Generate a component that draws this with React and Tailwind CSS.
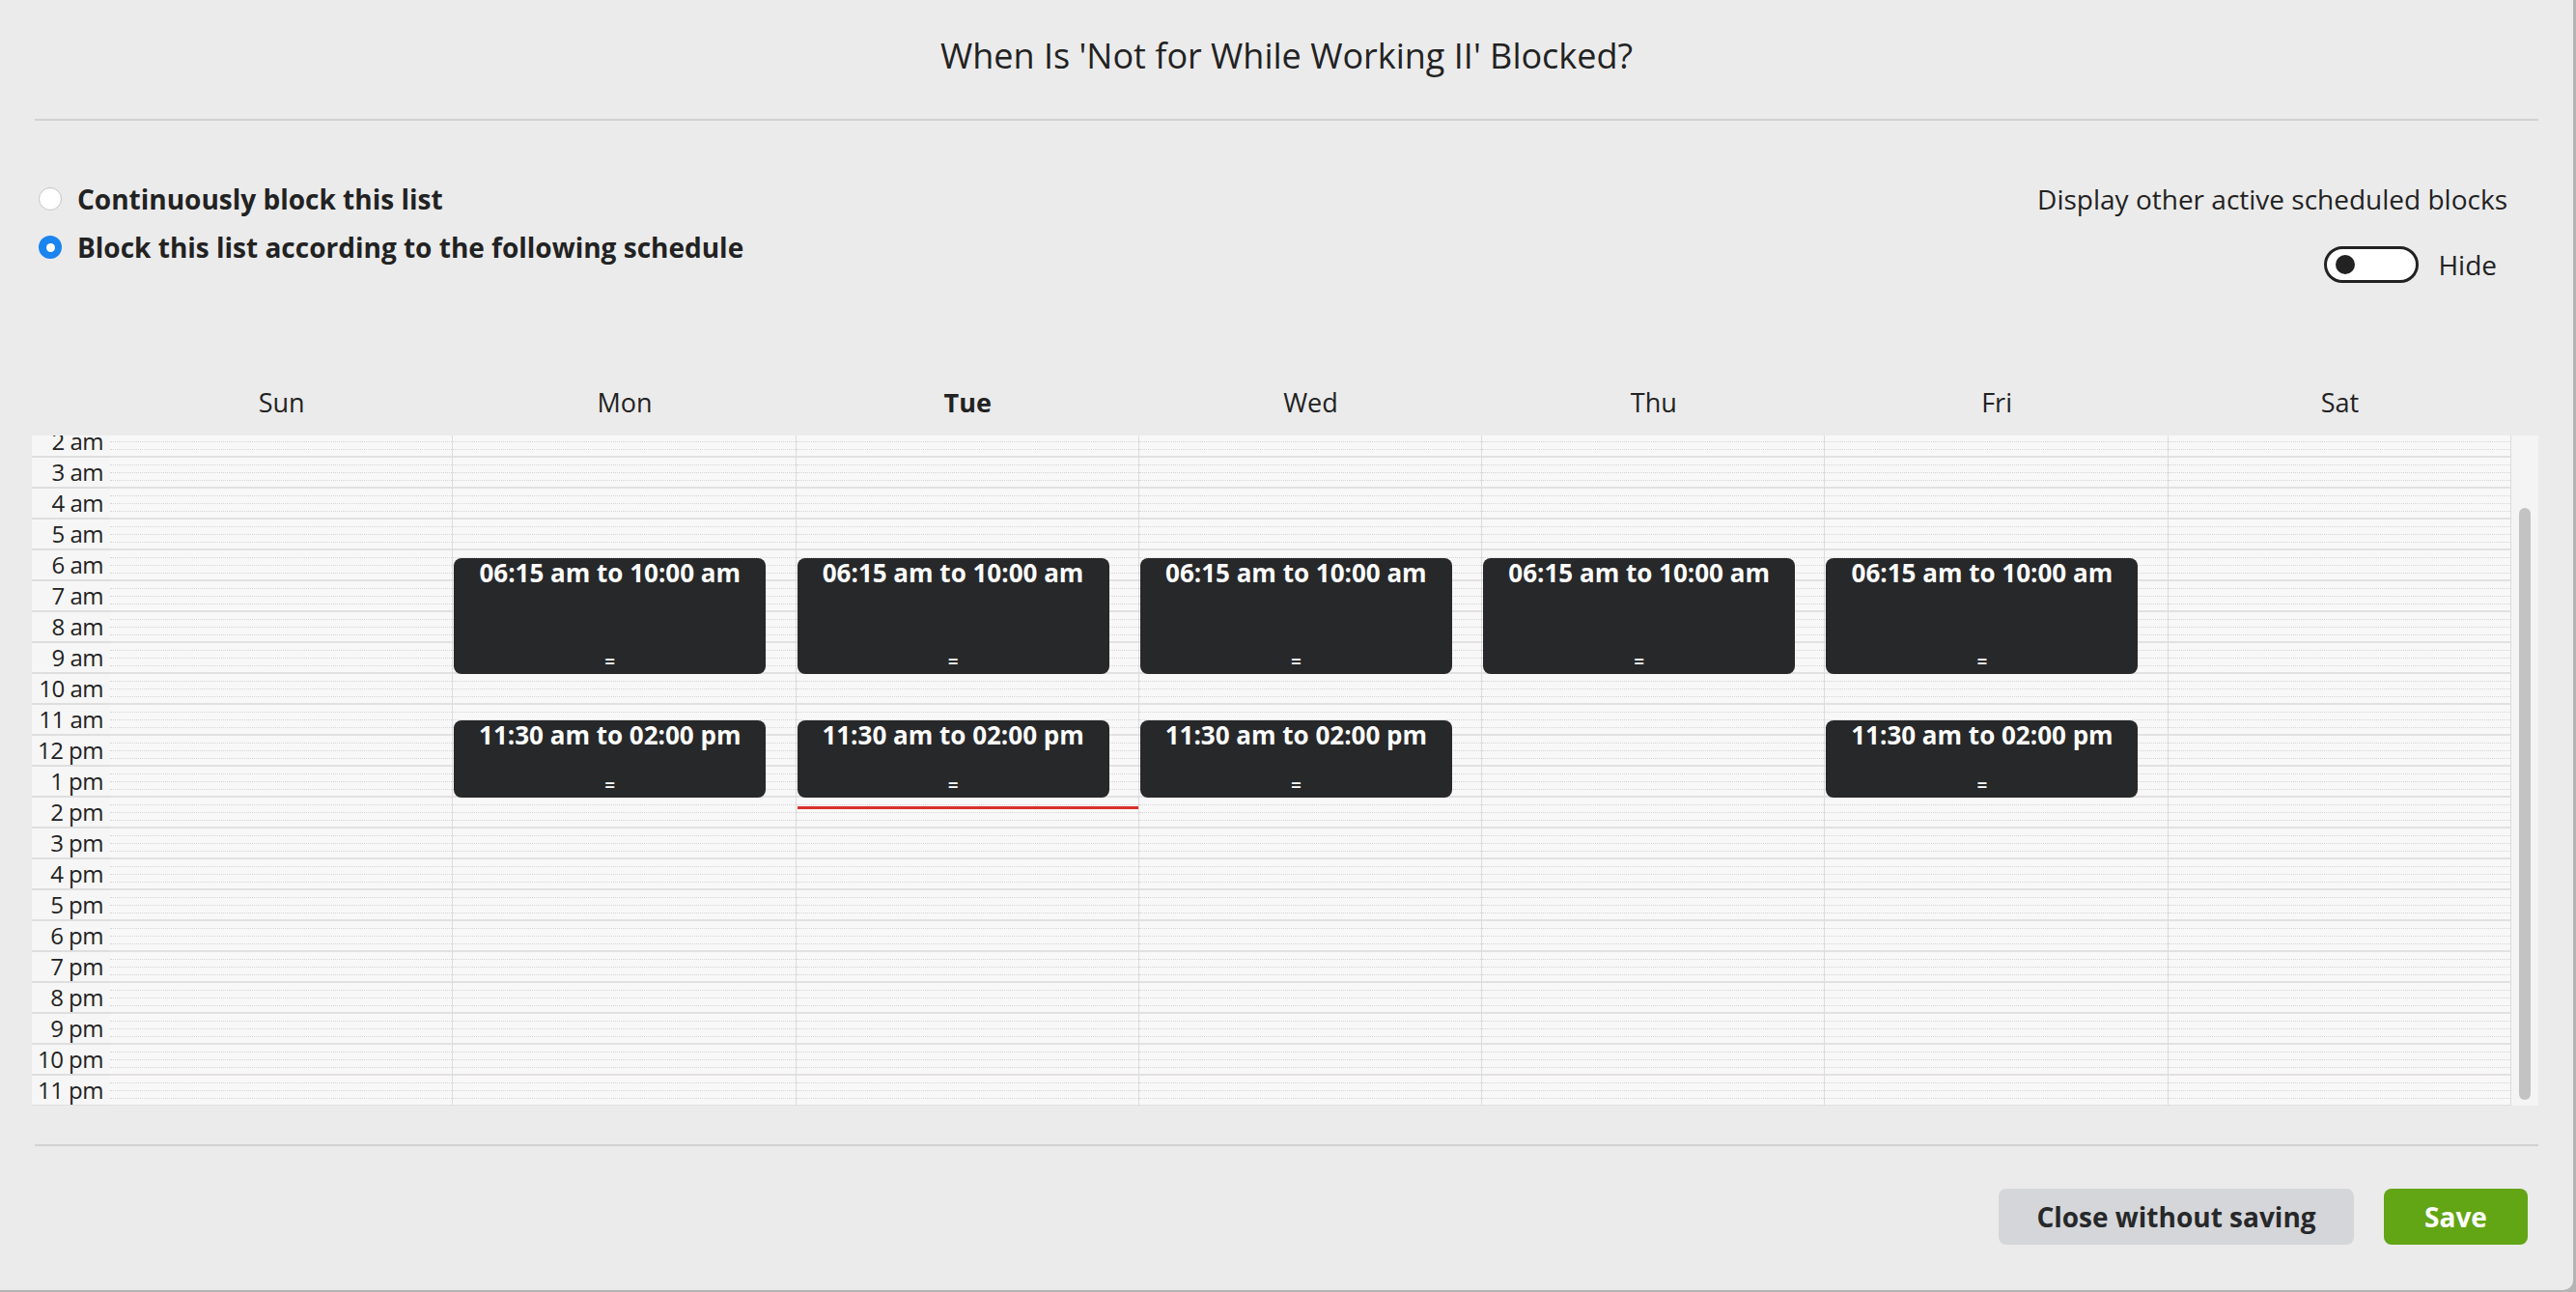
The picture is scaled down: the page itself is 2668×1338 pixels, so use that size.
import React from "react";

const DAYS = ["Sun", "Mon", "Tue", "Wed", "Thu", "Fri", "Sat"];
const HOUR = 32;

const hourLabel = (h) => {
  const n = h % 12 === 0 ? 12 : h % 12;
  return `${n} ${h < 12 ? "am" : "pm"}`;
};

const morning = { start: 6.25, end: 10, label: "06:15 am to 10:00 am" };
const midday = { start: 11.5, end: 14, label: "11:30 am to 02:00 pm" };

const events = {
  Mon: [morning, midday],
  Tue: [morning, midday],
  Wed: [morning, midday],
  Thu: [morning],
  Fri: [morning, midday],
};

function HourCell() {
  return (
    <div className="h-[32px] flex flex-col border-b-2 border-[#e2e0e0]">
      <div className="h-[8px] border-b border-dotted border-[#d6d4d4]" />
      <div className="h-[8px] border-b border-dotted border-[#d6d4d4]" />
      <div className="h-[8px] border-b border-dotted border-[#d6d4d4]" />
      <div className="flex-1" />
    </div>
  );
}

function DayColumn({ day }) {
  const list = events[day] || [];
  return (
    <div className="relative border-r border-[#dddcdc]">
      {Array.from({ length: 24 }, (_, h) => (
        <HourCell key={h} />
      ))}
      {list.map((ev, i) => (
        <div
          key={i}
          className="absolute left-[1px] w-[323px] rounded-[8px] bg-[#27282a] text-white"
          style={{ top: ev.start * HOUR, height: (ev.end - ev.start) * HOUR }}
        >
          <div className="text-center text-[26px] font-bold leading-[30px]">{ev.label}</div>
          <div className="absolute bottom-[3px] left-0 right-0 text-center text-[19px] font-semibold leading-[20px]">=</div>
        </div>
      ))}
      {day === "Tue" && (
        <div className="absolute left-[1px] right-0 top-[457px] h-[3px] bg-[#d8322a]" />
      )}
    </div>
  );
}

function Radio({ checked }) {
  if (checked) {
    return (
      <span className="flex h-[24px] w-[24px] items-center justify-center rounded-full bg-[#1b84ef]">
        <span className="h-[9px] w-[9px] rounded-full bg-white" />
      </span>
    );
  }
  return <span className="block h-[24px] w-[24px] rounded-full border border-[#c4c4c4] bg-white" />;
}

export default function App() {
  return (
    <div
      className="h-[1338px] w-[2668px] overflow-hidden bg-[#b4b4b4] text-[#222]"
      style={{ fontFamily: '"Open Sans", "Noto Sans", sans-serif' }}
    >
      <div className="flex h-[1336px] w-[2665px] flex-col rounded-br-[10px] bg-[#ebebeb] px-[36px]">
        <div className="flex h-[125px] items-center justify-center border-b-2 border-[#d2d2d2] pb-[8px]">
          <h1 className="text-[36px] font-normal text-[#222]">When Is 'Not for While Working II' Blocked?</h1>
        </div>

        <div className="flex h-[272px] justify-between pt-[56px]">
          <div className="flex flex-col">
            <label className="flex h-[50px] items-center gap-[16px] pl-[4px]">
              <Radio />
              <span className="text-[28px] font-bold">Continuously block this list</span>
            </label>
            <label className="flex h-[50px] items-center gap-[16px] pl-[4px]">
              <Radio checked />
              <span className="text-[28px] font-bold">Block this list according to the following schedule</span>
            </label>
          </div>
          <div className="flex flex-col items-end pr-[32px]">
            <div className="flex h-[50px] items-center text-[28px]">Display other active scheduled blocks</div>
            <div className="mt-[22px] flex items-center gap-[20px] pr-[11px]">
              <span className="flex h-[38px] w-[98px] items-center rounded-full border-[3px] border-[#222] bg-white pl-[9px]">
                <span className="h-[20px] w-[20px] rounded-full bg-[#222]" />
              </span>
              <span className="text-[28px]">Hide</span>
            </div>
          </div>
        </div>

        <div className="-ml-[3px] grid h-[54px] grid-cols-[81px_repeat(7,1fr)_28px]">
          <div />
          {DAYS.map((d) => (
            <div key={d} className={`text-center text-[27px] leading-[40px] ${d === "Tue" ? "font-bold" : ""}`}>
              {d}
            </div>
          ))}
          <div />
        </div>

        <div className="-ml-[3px] flex h-[694px]">
          <div className="flex-1 overflow-hidden bg-[#f9f8f8]">
            <div className="-mt-[73px] grid grid-cols-[81px_repeat(7,1fr)]">
              <div className="flex flex-col bg-[#f6f6f6]">
                {Array.from({ length: 24 }, (_, h) => (
                  <div
                    key={h}
                    className="flex h-[32px] items-center justify-end border-b-2 border-[#dedede] pr-[7px] text-[24px] leading-none tracking-[-0.5px]"
                  >
                    {hourLabel(h)}
                  </div>
                ))}
              </div>
              {DAYS.map((d) => (
                <DayColumn key={d} day={d} />
              ))}
            </div>
          </div>
          <div className="flex w-[28px] flex-col bg-[#f4f4f4] px-[8px] pb-[6px] pt-[75px]">
            <div className="flex-1 rounded-full bg-[#c3c3c3]" />
          </div>
        </div>

        <div className="mt-[40px] border-b-2 border-[#d2d2d2]" />

        <div className="mt-[44px] flex justify-end gap-[31px] pr-[11px]">
          <button className="h-[58px] w-[368px] rounded-[8px] bg-[#d5d6d9] text-[28px] font-bold text-[#27282a]">
            Close without saving
          </button>
          <button className="h-[58px] w-[149px] rounded-[8px] bg-[#62a515] text-[28px] font-bold text-white">
            Save
          </button>
        </div>
      </div>
    </div>
  );
}
